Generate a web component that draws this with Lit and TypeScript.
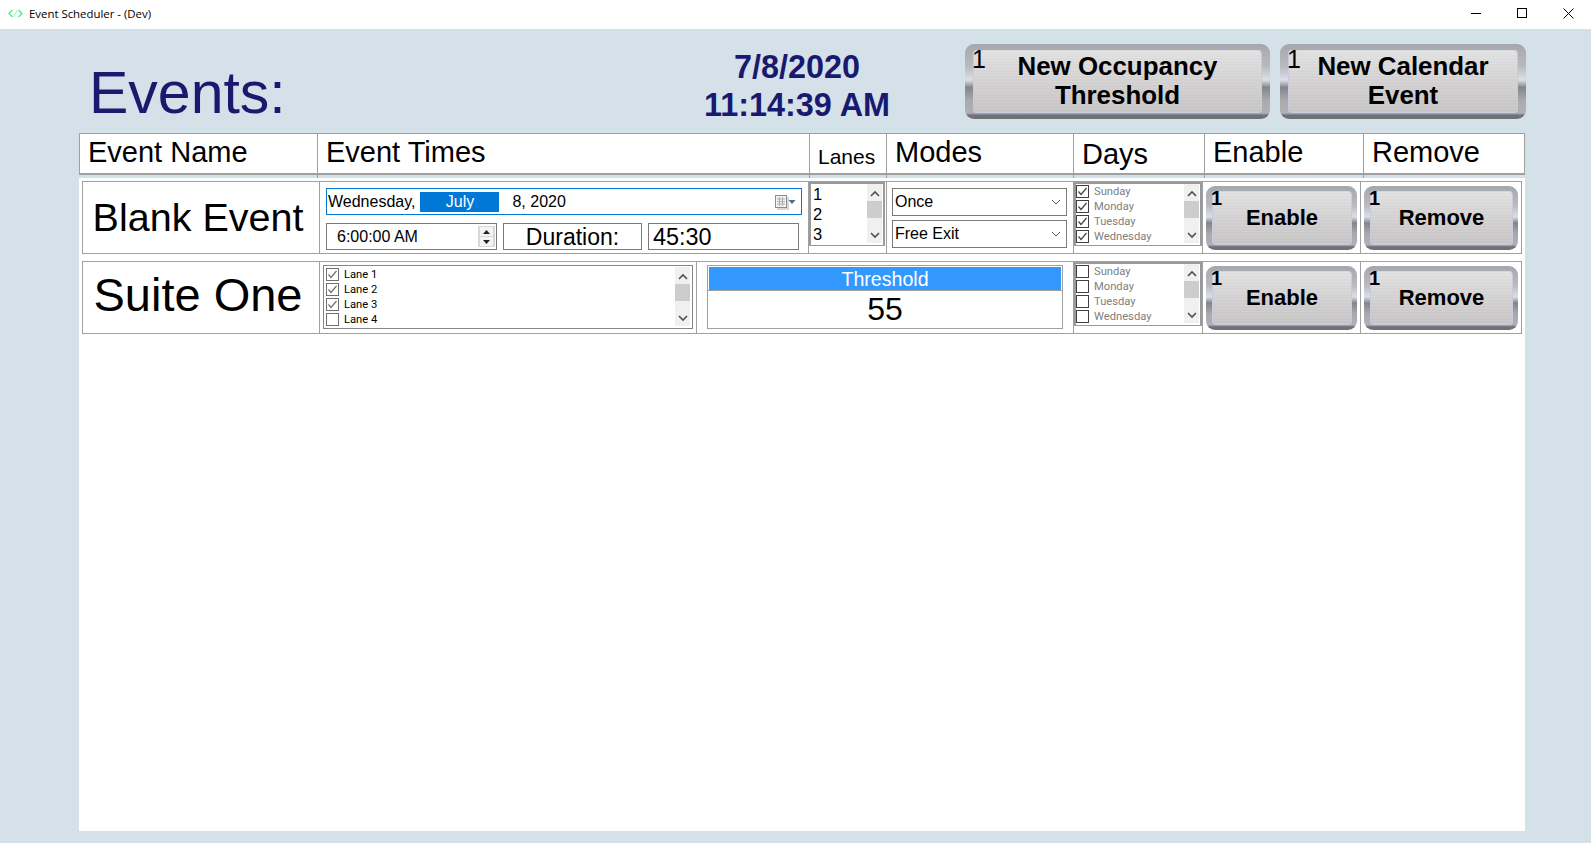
import { LitElement, html, css, svg } from 'lit';
import { customElement } from 'lit/decorators.js';

// scrollbar arrows and ticks are shared by all the little list boxes
const chevUp = svg`<polyline points="1,6 5,2 9,6" fill="none" stroke="#505050" stroke-width="1.6" />`;
const chevDown = svg`<polyline points="1,2 5,6 9,2" fill="none" stroke="#505050" stroke-width="1.6" />`;

@customElement('app-root')
export class AppRoot extends LitElement {
  static styles = css`
    :host {
      display: block;
      width: 1591px;
      height: 843px;
      overflow: hidden;
      font-family: 'Liberation Sans', Arial, sans-serif;
      color: #000;
      background: #d5e1e9;
    }

    /* title bar */
    .titlebar {
      height: 29px;
      box-sizing: border-box;
      padding: 0 0 2px 8px;
      background: #fff;
      display: flex;
      align-items: center;
      font: 11.4px 'Open Sans', sans-serif;
    }
    .titlebar svg.logo { margin-right: 6px; }
    .winctl { margin-left: auto; display: flex; }
    .winctl span { width: 46px; height: 27px; display: flex; align-items: center; justify-content: center; }

    .frame {
      height: 814px;
      box-sizing: border-box;
      padding: 0 66px 12px 79px;
      display: flex;
      flex-direction: column;
    }

    /* top strip, its last button sticks out a pixel past the table */
    .top { height: 104px; display: flex; flex: none; }
    .top > * { flex: none; }
    .title {
      width: 623px;
      padding: 31px 0 0 10px;
      box-sizing: border-box;
      font-size: 59px;
      line-height: 66px;
      color: #191970;
    }
    .clock {
      width: 190px;
      padding-top: 19px;
      text-align: center;
      font-size: 32.4px;
      line-height: 38px;
      font-weight: bold;
      color: #191970;
      white-space: nowrap;
    }
    .top-btns { margin-left: 73px; padding-top: 15px; display: flex; gap: 10px; }

    /* metal buttons */
    .metal {
      position: relative;
      box-sizing: border-box;
      border-radius: 9px;
      display: flex;
      background:
        linear-gradient(180deg, #a4a7ad 0, #a8abb1 7%, transparent 9%, transparent 92%, #6f7177 95%, #6f7177 100%),
        linear-gradient(180deg, #a8a8ac 0%, #b8bac0 30%, #dcdfe6 48%, #84858a 58%, #a8aaae 75%, #b4b4b8 100%);
    }
    .plate {
      flex: 1;
      border-radius: 4px;
      border: 1px solid #c6cbe0;
      border-top-color: #d8d8d8;
      display: flex;
      align-items: center;
      justify-content: center;
      text-align: center;
      font-weight: bold;
      background:
        repeating-linear-gradient(180deg, rgba(255, 255, 255, 0.07) 0 1px, rgba(0, 0, 0, 0.012) 1px 3px),
        linear-gradient(180deg, #e3e2e3 0%, #d4d2d3 50%, #c7c5c6 100%);
    }
    .metal .num { position: absolute; }
    .big { width: 305px; height: 75px; padding: 6px 8px; flex: none; }
    .big.wide { width: 246px; }
    .big .plate { font-size: 25.9px; line-height: 29px; padding-bottom: 2px; }
    .big .num { left: 7px; top: 0; font-size: 25px; line-height: 30px; }
    .small { height: 64px; padding: 5px 5px 5px 6px; }
    .small .plate { font-size: 22px; }
    .small .num { left: 5px; top: 0; font-size: 20px; line-height: 24px; font-weight: bold; }

    /* table header */
    .heads {
      flex: none;
      height: 42px;
      box-sizing: border-box;
      display: grid;
      grid-template-columns: 237px 492px 77px 187px 131px 159px 1fr;
      background: #fff;
      border: 1px solid #a0a0a0;
      border-width: 1px 1px 2px 1px;
      font-size: 29px;
      line-height: 37px;
    }
    .heads div { padding-left: 8px; border-left: 1px solid #a0a0a0; white-space: nowrap; }
    .heads div:first-child { border-left: 0; }
    .heads .lanes { font-size: 21px; line-height: 46px; }
    .heads .days { line-height: 41px; }

    /* white sheet with the event rows */
    .sheet {
      flex: 1;
      margin-top: 3px;
      background: #fff;
      padding: 3px 3px 0 3px;
      display: flex;
      flex-direction: column;
      gap: 7px;
    }
    .row {
      height: 73px;
      box-sizing: border-box;
      display: grid;
      border: 1px solid #a0a0a0;
    }
    .row.calendar { grid-template-columns: 236px 489px 78px 187px 129px 158px 1fr; }
    .row.occupancy { grid-template-columns: 236px 377px 377px 129px 158px 1fr; }
    .cell { border-left: 1px solid #a0a0a0; min-width: 0; box-sizing: border-box; }
    .cell:first-child { border-left: 0; }
    .name {
      font-size: 39.5px;
      padding: 0 6px 1px 0;
      display: flex;
      align-items: center;
      justify-content: center;
      white-space: nowrap;
    }
    .name.suite { font-size: 47px; padding-bottom: 6px; }

    /* date + time block */
    .times { padding: 6px 0 0 6px; }
    .date {
      width: 476px;
      height: 27px;
      box-sizing: border-box;
      border: 1px solid #0078d7;
      display: flex;
      align-items: center;
      font-size: 16px;
      padding-left: 1px;
    }
    .date .month {
      width: 79px;
      height: 20px;
      margin: 0 13px 0 5px;
      background: #0078d7;
      color: #fff;
      line-height: 20px;
      text-align: center;
    }
    .date svg { margin-left: auto; margin-right: 3px; }
    .times-line { display: flex; gap: 6px; margin-top: 8px; }
    .box {
      height: 27px;
      box-sizing: border-box;
      border: 1px solid #7a7a7a;
      display: flex;
      align-items: center;
    }
    .time { width: 171px; font-size: 16px; padding-left: 10px; }
    .spin {
      margin-left: auto;
      margin-right: 1px;
      width: 17px;
      height: 21px;
      background: #d8d8d8;
      display: flex;
      flex-direction: column;
      justify-content: center;
      gap: 1px;
      align-items: center;
    }
    .spin i { width: 13px; height: 9px; background: #f4f4f4; display: flex; align-items: center; justify-content: center; }
    .duration { width: 139px; font-size: 23px; justify-content: center; padding-top: 2px; }
    .dur-val { width: 151px; font-size: 23.4px; padding: 2px 0 0 4px; }

    /* list boxes */
    .list {
      box-sizing: border-box;
      border: 2px solid #9a9a9a;
      border-width: 2px 2px 1px 2px;
      height: 64px;
      background: #fff;
      display: flex;
      overflow: hidden;
    }
    .list .items { flex: 1; min-width: 0; }
    .scroll {
      width: 15px;
      margin: 0 1px 2px 0;
      background: #f0f0f0;
      display: flex;
      flex-direction: column;
      align-items: center;
      padding: 6px 0 4px;
      box-sizing: border-box;
    }
    .scroll svg { flex: none; }
    .scroll .thumb { width: 15px; height: 17px; margin-top: 3px; background: #cdcdcd; flex: none; }
    .scroll .down { margin-top: auto; }
    .laneslist { margin-right: 1px; }
    .laneslist .n { font-size: 16.5px; line-height: 20px; padding-left: 2px; }
    .check {
      height: 15px;
      display: flex;
      align-items: center;
      font: 11.2px/15px Roboto, sans-serif;
      gap: 5px;
    }
    .muted .check { color: #808080; }
    .check svg { flex: none; }
    .lane-cell { padding: 3px 3px 0 3px; }
    .lane-cell .list { border: 1px solid #85858f; padding: 1px 1px 0 1px; }
    .lane-cell .checks { padding-left: 1px; }

    /* combos */
    .modes { padding: 6px 6px 0 5px; display: flex; flex-direction: column; gap: 4px; }
    .combo {
      height: 28px;
      box-sizing: border-box;
      border: 1px solid #7a7a7a;
      display: flex;
      align-items: center;
      font-size: 16px;
      padding: 0 5px 0 2px;
      justify-content: space-between;
    }

    /* threshold readout */
    .thr-cell { padding: 3px 10px 0 10px; }
    .thr {
      height: 64px;
      box-sizing: border-box;
      border: 1px solid #a0a0a0;
      padding: 1px;
      text-align: center;
      display: flex;
      flex-direction: column;
    }
    .thr b {
      font-weight: normal;
      height: 23px;
      background: #3399ff;
      color: #fff;
      font-size: 19.6px;
      line-height: 25px;
      flex: none;
    }
    .thr span {
      flex: 1;
      margin: 0 -1px -1px;
      border-top: 1px solid #a0a0a0;
      font-size: 32px;
      line-height: 36px;
    }

    .btn-cell { padding: 4px 3px 0 3px; }
  `;

  private box(checked: boolean, dark: boolean) {
    const c = dark ? '#404040' : '#707070';
    return html`<svg width="13" height="13" viewBox="0 0 13 13">
      <rect x="0.5" y="0.5" width="12" height="12" fill="#fff" stroke=${c} />
      ${checked ? svg`<polyline points="2.5,6.5 5,9.5 10.5,3" fill="none" stroke=${c} stroke-width="1.2" />` : ''}
    </svg>`;
  }

  private scrollbar() {
    return html`<div class="scroll">
      <svg width="10" height="8" viewBox="0 0 10 8">${chevUp}</svg>
      <div class="thumb"></div>
      <svg class="down" width="10" height="8" viewBox="0 0 10 8">${chevDown}</svg>
    </div>`;
  }

  private checkList(items: string[], ticked: boolean, muted: boolean) {
    return html`<div class="list ${muted ? 'muted' : ''}">
      <div class="items checks">
        ${items.map((t) => html`<div class="check">${this.box(ticked && t !== 'Lane 4', muted)}<span>${t}</span></div>`)}
      </div>
      ${this.scrollbar()}
    </div>`;
  }

  private metal(label: unknown, kind: string) {
    return html`<div class="metal ${kind}"><div class="plate">${label}</div><span class="num">1</span></div>`;
  }

  private combo(text: string) {
    return html`<div class="combo">
      <span>${text}</span>
      <svg width="10" height="6" viewBox="0 0 10 6"><polyline points="1,1 5,5 9,1" fill="none" stroke="#606060" /></svg>
    </div>`;
  }

  render() {
    const days = ['Sunday', 'Monday', 'Tuesday', 'Wednesday'];
    const lanes = ['Lane 1', 'Lane 2', 'Lane 3', 'Lane 4'];
    return html`
      <div class="titlebar">
        <svg class="logo" width="15" height="9" viewBox="0 0 15 9" fill="none" stroke="#55f08a" stroke-width="1.5">
          <polyline points="4.5,1 1,4.5 4.5,8" />
          <polyline points="10.5,1 14,4.5 10.5,8" />
          <line x1="6" y1="8" x2="9" y2="1" stroke="#a8e8c0" stroke-width="1" />
        </svg>
        <span>Event Scheduler - (Dev)</span>
        <div class="winctl">
          <span><svg width="11" height="11" viewBox="0 0 11 11"><line x1="0" y1="5.5" x2="10" y2="5.5" stroke="#000" /></svg></span>
          <span><svg width="11" height="11" viewBox="0 0 11 11"><rect x="0.5" y="0.5" width="9" height="9" fill="none" stroke="#000" /></svg></span>
          <span><svg width="11" height="11" viewBox="0 0 11 11"><path d="M0.5 0.5 L10.5 10.5 M10.5 0.5 L0.5 10.5" stroke="#000" /></svg></span>
        </div>
      </div>
      <div class="frame">
        <div class="top">
          <div class="title">Events:</div>
          <div class="clock">7/8/2020<br />11:14:39 AM</div>
          <div class="top-btns">
            ${this.metal(html`New Occupancy<br />Threshold`, 'big')}
            ${this.metal(html`New Calendar<br />Event`, 'big wide')}
          </div>
        </div>
        <div class="heads">
          <div>Event Name</div>
          <div>Event Times</div>
          <div class="lanes">Lanes</div>
          <div>Modes</div>
          <div class="days">Days</div>
          <div>Enable</div>
          <div>Remove</div>
        </div>
        <div class="sheet">
          <div class="row calendar">
            <div class="cell name">Blank Event</div>
            <div class="cell times">
              <div class="date">
                <span>Wednesday,</span><span class="month">July</span><span>8, 2020</span>
                <svg width="24" height="16" viewBox="0 0 24 16">
                  <rect x="3" y="3" width="12" height="13" fill="#d8d8d8" />
                  <rect x="1.5" y="1.5" width="11" height="12" fill="#f2f2f2" stroke="#8c8c8c" />
                  <path d="M3 5h8M3 7.5h8M3 10h8M5.5 3v9M8.5 3v9" stroke="#b0b0b0" />
                  <path d="M14.5 6h7l-3.5 4z" fill="#4f6a90" />
                </svg>
              </div>
              <div class="times-line">
                <div class="box time">
                  <span>6:00:00 AM</span>
                  <div class="spin">
                    <i><svg width="7" height="4" viewBox="0 0 7 4"><path d="M0 4L3.5 0L7 4z" fill="#222" /></svg></i>
                    <i><svg width="7" height="4" viewBox="0 0 7 4"><path d="M0 0L3.5 4L7 0z" fill="#222" /></svg></i>
                  </div>
                </div>
                <div class="box duration">Duration:</div>
                <div class="box dur-val">45:30</div>
              </div>
            </div>
            <div class="cell">
              <div class="list laneslist">
                <div class="items"><div class="n">1</div><div class="n">2</div><div class="n">3</div></div>
                ${this.scrollbar()}
              </div>
            </div>
            <div class="cell modes">${this.combo('Once')}${this.combo('Free Exit')}</div>
            <div class="cell">${this.checkList(days, true, true)}</div>
            <div class="cell btn-cell">${this.metal('Enable', 'small')}</div>
            <div class="cell btn-cell">${this.metal('Remove', 'small')}</div>
          </div>
          <div class="row occupancy">
            <div class="cell name suite">Suite One</div>
            <div class="cell lane-cell">${this.checkList(lanes, true, false)}</div>
            <div class="cell thr-cell">
              <div class="thr"><b>Threshold</b><span>55</span></div>
            </div>
            <div class="cell">${this.checkList(days, false, true)}</div>
            <div class="cell btn-cell">${this.metal('Enable', 'small')}</div>
            <div class="cell btn-cell">${this.metal('Remove', 'small')}</div>
          </div>
        </div>
      </div>
    `;
  }
}
